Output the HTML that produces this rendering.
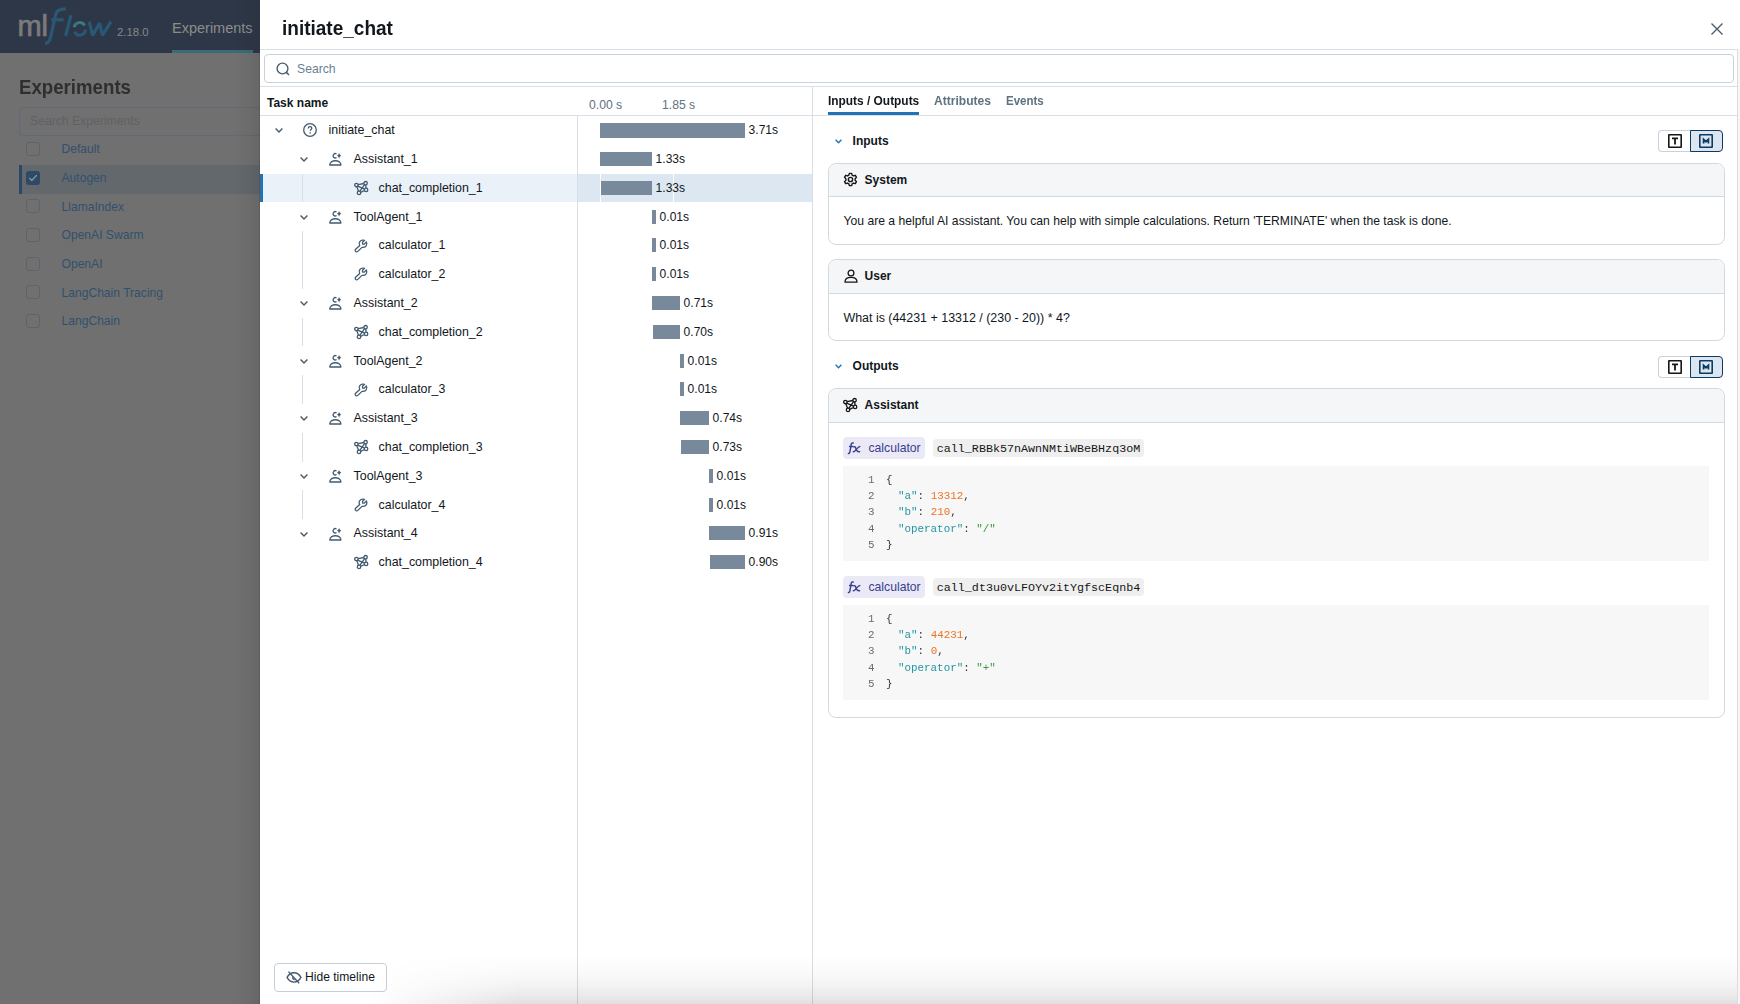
<!DOCTYPE html>
<html><head><meta charset="utf-8">
<style>
html,body{margin:0;padding:0;}
body{width:1740px;height:1004px;overflow:hidden;position:relative;background:#707070;font-family:"Liberation Sans", sans-serif;}
.a{position:absolute;box-sizing:border-box;}
.t{position:absolute;white-space:pre;}
svg{position:absolute;overflow:visible;}
</style></head><body>
<div class="a" style="left:0px;top:0px;width:260px;height:53px;background:#2e3747;"></div>
<div class="t " style="left:17.6px;top:8.00px;font-size:29px;line-height:37.7px;color:#7b7b7b;-webkit-text-stroke:0.7px #7b7b7b;letter-spacing:-0.3px;">ml</div>
<svg style="left:0;top:0" width="120" height="53" viewBox="0 0 120 53"><g fill="none" stroke="#285874" stroke-width="3.2" stroke-linecap="butt"><path d="M45 43.4 C48 43.5 49.6 41.5 50.5 37.5 L55.8 14 C56.8 10.2 59.5 8.8 66 8.8"/><path d="M51.3 19.8 H63.6"/><path d="M71 15.2 L65.6 36"/><path d="M89.2 21.6 L92.6 35.4 L99.6 23.2 L102.4 35.4 L111 21.6" stroke-linejoin="bevel"/></g><path d="M74.2 27.2 A5.6 5.6 0 0 1 84.6 25.4" fill="none" stroke="#3b7780" stroke-width="3"/><path d="M85.4 29.6 A5.6 5.6 0 0 1 74.6 31.6" fill="none" stroke="#285874" stroke-width="3"/></svg>
<div class="t " style="left:117px;top:24.84px;font-size:11.4px;line-height:14.82px;color:#888888;">2.18.0</div>
<div class="t " style="left:172px;top:18.55px;font-size:14.5px;line-height:18.85px;color:#8c8c8c;">Experiments</div>
<div class="a" style="left:172px;top:50px;width:81px;height:3px;background:#3b6a79;"></div>
<div class="t " style="left:19px;top:75.47px;font-size:19.8px;line-height:25.74px;color:#2f2f2f;font-weight:bold;transform:scaleX(0.943);transform-origin:0 0;">Experiments</div>
<div class="a" style="left:19px;top:107px;width:260px;height:29px;border:1px solid #5f6b76;border-radius:4px;border-right:none;"></div>
<div class="t " style="left:30px;top:113.84px;font-size:12.2px;line-height:15.86px;color:#5e6266;">Search Experiments</div>
<div class="a" style="left:26px;top:142.0px;width:14px;height:14px;border:1px solid #5d646b;border-radius:3px;"></div>
<div class="t " style="left:61.5px;top:142.24px;font-size:12.1px;line-height:15.73px;color:#32506d;">Default</div>
<div class="a" style="left:19px;top:164.97000000000003px;width:241px;height:29px;background:#63686d;"></div>
<div class="a" style="left:19px;top:164.97000000000003px;width:3px;height:29px;background:#2d4864;"></div>
<div class="a" style="left:26px;top:170.67000000000002px;width:14px;height:14px;background:#2e4a67;border-radius:3px;"></div>
<svg style="left:26px;top:170.67000000000002px" width="14" height="14" viewBox="0 0 14 14"><path d="M3.4 6.8 L5.8 9.4 L10.8 4.2" fill="none" stroke="#95a3b0" stroke-width="1.1"/></svg>
<div class="t " style="left:61.5px;top:170.91px;font-size:12.1px;line-height:15.73px;color:#32506d;">Autogen</div>
<div class="a" style="left:26px;top:199.34px;width:14px;height:14px;border:1px solid #5d646b;border-radius:3px;"></div>
<div class="t " style="left:61.5px;top:199.58px;font-size:12.1px;line-height:15.73px;color:#32506d;">LlamaIndex</div>
<div class="a" style="left:26px;top:228.01px;width:14px;height:14px;border:1px solid #5d646b;border-radius:3px;"></div>
<div class="t " style="left:61.5px;top:228.25px;font-size:12.1px;line-height:15.73px;color:#32506d;">OpenAI Swarm</div>
<div class="a" style="left:26px;top:256.68px;width:14px;height:14px;border:1px solid #5d646b;border-radius:3px;"></div>
<div class="t " style="left:61.5px;top:256.92px;font-size:12.1px;line-height:15.73px;color:#32506d;">OpenAI</div>
<div class="a" style="left:26px;top:285.35px;width:14px;height:14px;border:1px solid #5d646b;border-radius:3px;"></div>
<div class="t " style="left:61.5px;top:285.59px;font-size:12.1px;line-height:15.73px;color:#32506d;">LangChain Tracing</div>
<div class="a" style="left:26px;top:314.02px;width:14px;height:14px;border:1px solid #5d646b;border-radius:3px;"></div>
<div class="t " style="left:61.5px;top:314.26px;font-size:12.1px;line-height:15.73px;color:#32506d;">LangChain</div>
<div class="a" style="left:232px;top:53px;width:28px;height:951px;background:linear-gradient(to right, rgba(0,0,0,0), rgba(0,0,0,0.03) 50%, rgba(0,0,0,0.085));"></div>
<div class="a" style="left:259px;top:53px;width:1px;height:951px;background:rgba(0,0,0,0.1);"></div>
<div class="a" style="left:232px;top:0px;width:28px;height:53px;background:linear-gradient(to right, rgba(0,0,0,0), rgba(0,0,0,0.03) 50%, rgba(0,0,0,0.06));"></div>
<div class="a" style="left:260px;top:0px;width:1480px;height:1004px;background:#fff;"></div>
<div class="t " style="left:282px;top:13.87px;font-size:21px;line-height:27.3px;color:#11171c;font-weight:bold;transform:scaleX(0.905);transform-origin:0 0;">initiate_chat</div>
<svg style="left:1710.5px;top:23px" width="12" height="12" viewBox="0 0 12 12"><path d="M0.5 0.5 L11.5 11.5 M11.5 0.5 L0.5 11.5" stroke="#4a5d6e" stroke-width="1.4" fill="none"/></svg>
<div class="a" style="left:260px;top:49px;width:1478px;height:1px;background:#d8dfe6;"></div>
<div class="a" style="left:1737px;top:49px;width:1px;height:955px;background:#dcdcdc;"></div>
<div class="a" style="left:1738px;top:49px;width:2px;height:955px;background:#f6f6f6;"></div>
<div class="a" style="left:264px;top:54px;width:1470px;height:29px;border:1px solid #c7d2dc;border-radius:4px;"></div>
<svg style="left:276px;top:62px" width="14" height="14" viewBox="0 0 14 14"><circle cx="6.5" cy="6.5" r="5.4" fill="none" stroke="#4a5e70" stroke-width="1.4"/><path d="M10.4 10.4 L13 13" stroke="#4a5e70" stroke-width="1.5"/></svg>
<div class="t " style="left:297px;top:61.84px;font-size:12.2px;line-height:15.86px;color:#6b7f90;">Search</div>
<div class="a" style="left:260px;top:86px;width:1477px;height:1px;background:#d8dfe6;"></div>
<div class="t " style="left:267px;top:96.04px;font-size:12px;line-height:15.6px;color:#11171c;font-weight:bold;">Task name</div>
<div class="t " style="left:589px;top:97.84px;font-size:12.2px;line-height:15.86px;color:#5f7281;">0.00 s</div>
<div class="t " style="left:662px;top:97.84px;font-size:12.2px;line-height:15.86px;color:#5f7281;">1.85 s</div>
<div class="a" style="left:260px;top:115px;width:552px;height:1px;background:#d8dfe6;"></div>
<div class="a" style="left:577px;top:115px;width:1px;height:889px;background:#d8dfe6;"></div>
<div class="a" style="left:812px;top:86px;width:1px;height:918px;background:#d8dfe6;"></div>
<svg style="left:275px;top:128.4px" width="8" height="5" viewBox="0 0 8 5"><path d="M0.6 0.6 L4 4 L7.4 0.6" fill="none" stroke="#445a6e" stroke-width="1.4"/></svg>
<svg style="left:303px;top:123.4px" width="14" height="14" viewBox="0 0 14 14"><circle cx="7" cy="7" r="6.3" fill="none" stroke="#445a6e" stroke-width="1.3"/><path d="M5.2 5.4 C5.2 4.3 6 3.7 7 3.7 C8 3.7 8.8 4.3 8.8 5.3 C8.8 6.4 7.3 6.5 7.3 7.8" fill="none" stroke="#445a6e" stroke-width="1.3"/><rect x="6.5" y="9.3" width="1.4" height="1.3" fill="#445a6e"/></svg>
<div class="t " style="left:328.6px;top:122.24px;font-size:12.4px;line-height:16.12px;color:#11171c;">initiate_chat</div>
<div class="a" style="left:600px;top:123.2px;width:145px;height:14.5px;background:#77899a;"></div>
<div class="t " style="left:748.6px;top:123.29px;font-size:12.05px;line-height:15.67px;color:#11171c;">3.71s</div>
<svg style="left:300px;top:157.20000000000002px" width="8" height="5" viewBox="0 0 8 5"><path d="M0.6 0.6 L4 4 L7.4 0.6" fill="none" stroke="#445a6e" stroke-width="1.4"/></svg>
<svg style="left:329px;top:152.20000000000002px" width="14" height="14" viewBox="0 0 14 14"><path d="M7.5 2.05 A2.15 2.15 0 1 0 7.5 5.55" fill="none" stroke="#445a6e" stroke-width="1.35"/><path d="M10.1 0.9 L10.95 2.85 L12.3 3.7 L10.95 4.55 L10.1 6.5 L9.25 4.55 L7.9 3.7 L9.25 2.85 Z" fill="#445a6e"/><path d="M0.8 13 C0.8 10.3 3.4 8.7 6.35 8.7 C9.3 8.7 11.9 10.3 11.9 13 Z" fill="none" stroke="#445a6e" stroke-width="1.35" stroke-linejoin="round"/></svg>
<div class="t " style="left:353.6px;top:151.04px;font-size:12.4px;line-height:16.12px;color:#11171c;">Assistant_1</div>
<div class="a" style="left:600px;top:152.00000000000003px;width:52px;height:14px;background:#77899a;"></div>
<div class="t " style="left:655.6px;top:152.09px;font-size:12.05px;line-height:15.67px;color:#11171c;">1.33s</div>
<div class="a" style="left:260px;top:173.6px;width:317px;height:28.8px;background:#ebf1f8;"></div>
<div class="a" style="left:260px;top:173.6px;width:3px;height:28.8px;background:#2272b4;"></div>
<div class="a" style="left:578px;top:173.6px;width:234px;height:28.8px;background:#dce7f1;"></div>
<div class="a" style="left:600px;top:173.6px;width:1px;height:28.8px;background:#fff;"></div>
<div class="a" style="left:673px;top:173.6px;width:1px;height:28.8px;background:#fff;"></div>
<div class="a" style="left:302px;top:173.6px;width:1px;height:28.8px;background:#d8dfe6;"></div>
<svg style="left:353.6px;top:181.0px" width="15" height="14" viewBox="0 0 15 14"><g fill="none" stroke="#445a6e" stroke-width="1.3"><circle cx="2.4" cy="4" r="1.7"/><circle cx="11.6" cy="2.2" r="1.7"/><circle cx="12.1" cy="8.9" r="1.7"/><circle cx="5" cy="11.9" r="1.7"/><path d="M4.1 3.6 L9.9 2.5 M11.8 3.9 L12 7.2 M10.5 9.5 L6.6 11.3 M4.6 10.2 L2.8 5.7 M3.6 5.2 L10.6 8.1 M10.6 3.6 L5.8 10.4"/></g></svg>
<div class="t " style="left:378.6px;top:179.84px;font-size:12.4px;line-height:16.12px;color:#11171c;">chat_completion_1</div>
<div class="a" style="left:601px;top:180.8px;width:51px;height:14px;background:#77899a;"></div>
<div class="t " style="left:655.6px;top:180.89px;font-size:12.05px;line-height:15.67px;color:#11171c;">1.33s</div>
<svg style="left:300px;top:214.8px" width="8" height="5" viewBox="0 0 8 5"><path d="M0.6 0.6 L4 4 L7.4 0.6" fill="none" stroke="#445a6e" stroke-width="1.4"/></svg>
<svg style="left:329px;top:209.8px" width="14" height="14" viewBox="0 0 14 14"><path d="M7.5 2.05 A2.15 2.15 0 1 0 7.5 5.55" fill="none" stroke="#445a6e" stroke-width="1.35"/><path d="M10.1 0.9 L10.95 2.85 L12.3 3.7 L10.95 4.55 L10.1 6.5 L9.25 4.55 L7.9 3.7 L9.25 2.85 Z" fill="#445a6e"/><path d="M0.8 13 C0.8 10.3 3.4 8.7 6.35 8.7 C9.3 8.7 11.9 10.3 11.9 13 Z" fill="none" stroke="#445a6e" stroke-width="1.35" stroke-linejoin="round"/></svg>
<div class="t " style="left:353.6px;top:208.64px;font-size:12.4px;line-height:16.12px;color:#11171c;">ToolAgent_1</div>
<div class="a" style="left:652px;top:209.60000000000002px;width:4px;height:14px;background:#77899a;"></div>
<div class="t " style="left:659.6px;top:209.69px;font-size:12.05px;line-height:15.67px;color:#11171c;">0.01s</div>
<div class="a" style="left:302px;top:231.20000000000002px;width:1px;height:28.8px;background:#d8dfe6;"></div>
<svg style="left:354px;top:237.60000000000002px" width="14" height="14" viewBox="0 0 14 14"><path d="M5.7 7.4 C5 6.3 5 4.8 5.8 3.7 C6.6 2.6 7.8 2.1 9 2.2 L10.6 2.3 L8.5 4.3 L8.6 6 L10.3 6.1 L12.4 4 C13 5.4 12.9 7 12 8.1 C11.1 9.2 9.6 9.6 8 9.4 L3.8 13.4 C3.2 14 2.2 14 1.6 13.4 C1 12.8 1 11.8 1.6 11.2 Z" fill="none" stroke="#445a6e" stroke-width="1.3" stroke-linejoin="round"/></svg>
<div class="t " style="left:378.6px;top:237.44px;font-size:12.4px;line-height:16.12px;color:#11171c;">calculator_1</div>
<div class="a" style="left:652px;top:238.40000000000003px;width:4px;height:14px;background:#77899a;"></div>
<div class="t " style="left:659.6px;top:238.49px;font-size:12.05px;line-height:15.67px;color:#11171c;">0.01s</div>
<div class="a" style="left:302px;top:260.0px;width:1px;height:28.8px;background:#d8dfe6;"></div>
<svg style="left:354px;top:266.4px" width="14" height="14" viewBox="0 0 14 14"><path d="M5.7 7.4 C5 6.3 5 4.8 5.8 3.7 C6.6 2.6 7.8 2.1 9 2.2 L10.6 2.3 L8.5 4.3 L8.6 6 L10.3 6.1 L12.4 4 C13 5.4 12.9 7 12 8.1 C11.1 9.2 9.6 9.6 8 9.4 L3.8 13.4 C3.2 14 2.2 14 1.6 13.4 C1 12.8 1 11.8 1.6 11.2 Z" fill="none" stroke="#445a6e" stroke-width="1.3" stroke-linejoin="round"/></svg>
<div class="t " style="left:378.6px;top:266.24px;font-size:12.4px;line-height:16.12px;color:#11171c;">calculator_2</div>
<div class="a" style="left:652px;top:267.2px;width:4px;height:14px;background:#77899a;"></div>
<div class="t " style="left:659.6px;top:267.29px;font-size:12.05px;line-height:15.67px;color:#11171c;">0.01s</div>
<svg style="left:300px;top:301.20000000000005px" width="8" height="5" viewBox="0 0 8 5"><path d="M0.6 0.6 L4 4 L7.4 0.6" fill="none" stroke="#445a6e" stroke-width="1.4"/></svg>
<svg style="left:329px;top:296.20000000000005px" width="14" height="14" viewBox="0 0 14 14"><path d="M7.5 2.05 A2.15 2.15 0 1 0 7.5 5.55" fill="none" stroke="#445a6e" stroke-width="1.35"/><path d="M10.1 0.9 L10.95 2.85 L12.3 3.7 L10.95 4.55 L10.1 6.5 L9.25 4.55 L7.9 3.7 L9.25 2.85 Z" fill="#445a6e"/><path d="M0.8 13 C0.8 10.3 3.4 8.7 6.35 8.7 C9.3 8.7 11.9 10.3 11.9 13 Z" fill="none" stroke="#445a6e" stroke-width="1.35" stroke-linejoin="round"/></svg>
<div class="t " style="left:353.6px;top:295.04px;font-size:12.4px;line-height:16.12px;color:#11171c;">Assistant_2</div>
<div class="a" style="left:652px;top:296.00000000000006px;width:28px;height:14px;background:#77899a;"></div>
<div class="t " style="left:683.6px;top:296.09px;font-size:12.05px;line-height:15.67px;color:#11171c;">0.71s</div>
<div class="a" style="left:302px;top:317.6px;width:1px;height:28.8px;background:#d8dfe6;"></div>
<svg style="left:353.6px;top:325.0px" width="15" height="14" viewBox="0 0 15 14"><g fill="none" stroke="#445a6e" stroke-width="1.3"><circle cx="2.4" cy="4" r="1.7"/><circle cx="11.6" cy="2.2" r="1.7"/><circle cx="12.1" cy="8.9" r="1.7"/><circle cx="5" cy="11.9" r="1.7"/><path d="M4.1 3.6 L9.9 2.5 M11.8 3.9 L12 7.2 M10.5 9.5 L6.6 11.3 M4.6 10.2 L2.8 5.7 M3.6 5.2 L10.6 8.1 M10.6 3.6 L5.8 10.4"/></g></svg>
<div class="t " style="left:378.6px;top:323.84px;font-size:12.4px;line-height:16.12px;color:#11171c;">chat_completion_2</div>
<div class="a" style="left:653px;top:324.8px;width:27px;height:14px;background:#77899a;"></div>
<div class="t " style="left:683.6px;top:324.89px;font-size:12.05px;line-height:15.67px;color:#11171c;">0.70s</div>
<svg style="left:300px;top:358.8px" width="8" height="5" viewBox="0 0 8 5"><path d="M0.6 0.6 L4 4 L7.4 0.6" fill="none" stroke="#445a6e" stroke-width="1.4"/></svg>
<svg style="left:329px;top:353.8px" width="14" height="14" viewBox="0 0 14 14"><path d="M7.5 2.05 A2.15 2.15 0 1 0 7.5 5.55" fill="none" stroke="#445a6e" stroke-width="1.35"/><path d="M10.1 0.9 L10.95 2.85 L12.3 3.7 L10.95 4.55 L10.1 6.5 L9.25 4.55 L7.9 3.7 L9.25 2.85 Z" fill="#445a6e"/><path d="M0.8 13 C0.8 10.3 3.4 8.7 6.35 8.7 C9.3 8.7 11.9 10.3 11.9 13 Z" fill="none" stroke="#445a6e" stroke-width="1.35" stroke-linejoin="round"/></svg>
<div class="t " style="left:353.6px;top:352.64px;font-size:12.4px;line-height:16.12px;color:#11171c;">ToolAgent_2</div>
<div class="a" style="left:680px;top:353.6px;width:4px;height:14px;background:#77899a;"></div>
<div class="t " style="left:687.6px;top:353.69px;font-size:12.05px;line-height:15.67px;color:#11171c;">0.01s</div>
<div class="a" style="left:302px;top:375.20000000000005px;width:1px;height:28.8px;background:#d8dfe6;"></div>
<svg style="left:354px;top:381.6px" width="14" height="14" viewBox="0 0 14 14"><path d="M5.7 7.4 C5 6.3 5 4.8 5.8 3.7 C6.6 2.6 7.8 2.1 9 2.2 L10.6 2.3 L8.5 4.3 L8.6 6 L10.3 6.1 L12.4 4 C13 5.4 12.9 7 12 8.1 C11.1 9.2 9.6 9.6 8 9.4 L3.8 13.4 C3.2 14 2.2 14 1.6 13.4 C1 12.8 1 11.8 1.6 11.2 Z" fill="none" stroke="#445a6e" stroke-width="1.3" stroke-linejoin="round"/></svg>
<div class="t " style="left:378.6px;top:381.44px;font-size:12.4px;line-height:16.12px;color:#11171c;">calculator_3</div>
<div class="a" style="left:680px;top:382.40000000000003px;width:4px;height:14px;background:#77899a;"></div>
<div class="t " style="left:687.6px;top:382.49px;font-size:12.05px;line-height:15.67px;color:#11171c;">0.01s</div>
<svg style="left:300px;top:416.4px" width="8" height="5" viewBox="0 0 8 5"><path d="M0.6 0.6 L4 4 L7.4 0.6" fill="none" stroke="#445a6e" stroke-width="1.4"/></svg>
<svg style="left:329px;top:411.4px" width="14" height="14" viewBox="0 0 14 14"><path d="M7.5 2.05 A2.15 2.15 0 1 0 7.5 5.55" fill="none" stroke="#445a6e" stroke-width="1.35"/><path d="M10.1 0.9 L10.95 2.85 L12.3 3.7 L10.95 4.55 L10.1 6.5 L9.25 4.55 L7.9 3.7 L9.25 2.85 Z" fill="#445a6e"/><path d="M0.8 13 C0.8 10.3 3.4 8.7 6.35 8.7 C9.3 8.7 11.9 10.3 11.9 13 Z" fill="none" stroke="#445a6e" stroke-width="1.35" stroke-linejoin="round"/></svg>
<div class="t " style="left:353.6px;top:410.24px;font-size:12.4px;line-height:16.12px;color:#11171c;">Assistant_3</div>
<div class="a" style="left:680px;top:411.2px;width:29px;height:14px;background:#77899a;"></div>
<div class="t " style="left:712.6px;top:411.29px;font-size:12.05px;line-height:15.67px;color:#11171c;">0.74s</div>
<div class="a" style="left:302px;top:432.80000000000007px;width:1px;height:28.8px;background:#d8dfe6;"></div>
<svg style="left:353.6px;top:440.20000000000005px" width="15" height="14" viewBox="0 0 15 14"><g fill="none" stroke="#445a6e" stroke-width="1.3"><circle cx="2.4" cy="4" r="1.7"/><circle cx="11.6" cy="2.2" r="1.7"/><circle cx="12.1" cy="8.9" r="1.7"/><circle cx="5" cy="11.9" r="1.7"/><path d="M4.1 3.6 L9.9 2.5 M11.8 3.9 L12 7.2 M10.5 9.5 L6.6 11.3 M4.6 10.2 L2.8 5.7 M3.6 5.2 L10.6 8.1 M10.6 3.6 L5.8 10.4"/></g></svg>
<div class="t " style="left:378.6px;top:439.04px;font-size:12.4px;line-height:16.12px;color:#11171c;">chat_completion_3</div>
<div class="a" style="left:681px;top:440.00000000000006px;width:28px;height:14px;background:#77899a;"></div>
<div class="t " style="left:712.6px;top:440.09px;font-size:12.05px;line-height:15.67px;color:#11171c;">0.73s</div>
<svg style="left:300px;top:474.0px" width="8" height="5" viewBox="0 0 8 5"><path d="M0.6 0.6 L4 4 L7.4 0.6" fill="none" stroke="#445a6e" stroke-width="1.4"/></svg>
<svg style="left:329px;top:469.0px" width="14" height="14" viewBox="0 0 14 14"><path d="M7.5 2.05 A2.15 2.15 0 1 0 7.5 5.55" fill="none" stroke="#445a6e" stroke-width="1.35"/><path d="M10.1 0.9 L10.95 2.85 L12.3 3.7 L10.95 4.55 L10.1 6.5 L9.25 4.55 L7.9 3.7 L9.25 2.85 Z" fill="#445a6e"/><path d="M0.8 13 C0.8 10.3 3.4 8.7 6.35 8.7 C9.3 8.7 11.9 10.3 11.9 13 Z" fill="none" stroke="#445a6e" stroke-width="1.35" stroke-linejoin="round"/></svg>
<div class="t " style="left:353.6px;top:467.84px;font-size:12.4px;line-height:16.12px;color:#11171c;">ToolAgent_3</div>
<div class="a" style="left:709px;top:468.8px;width:4px;height:14px;background:#77899a;"></div>
<div class="t " style="left:716.6px;top:468.89px;font-size:12.05px;line-height:15.67px;color:#11171c;">0.01s</div>
<div class="a" style="left:302px;top:490.4000000000001px;width:1px;height:28.8px;background:#d8dfe6;"></div>
<svg style="left:354px;top:496.80000000000007px" width="14" height="14" viewBox="0 0 14 14"><path d="M5.7 7.4 C5 6.3 5 4.8 5.8 3.7 C6.6 2.6 7.8 2.1 9 2.2 L10.6 2.3 L8.5 4.3 L8.6 6 L10.3 6.1 L12.4 4 C13 5.4 12.9 7 12 8.1 C11.1 9.2 9.6 9.6 8 9.4 L3.8 13.4 C3.2 14 2.2 14 1.6 13.4 C1 12.8 1 11.8 1.6 11.2 Z" fill="none" stroke="#445a6e" stroke-width="1.3" stroke-linejoin="round"/></svg>
<div class="t " style="left:378.6px;top:496.64px;font-size:12.4px;line-height:16.12px;color:#11171c;">calculator_4</div>
<div class="a" style="left:709px;top:497.6000000000001px;width:4px;height:14px;background:#77899a;"></div>
<div class="t " style="left:716.6px;top:497.69px;font-size:12.05px;line-height:15.67px;color:#11171c;">0.01s</div>
<svg style="left:300px;top:531.6px" width="8" height="5" viewBox="0 0 8 5"><path d="M0.6 0.6 L4 4 L7.4 0.6" fill="none" stroke="#445a6e" stroke-width="1.4"/></svg>
<svg style="left:329px;top:526.6px" width="14" height="14" viewBox="0 0 14 14"><path d="M7.5 2.05 A2.15 2.15 0 1 0 7.5 5.55" fill="none" stroke="#445a6e" stroke-width="1.35"/><path d="M10.1 0.9 L10.95 2.85 L12.3 3.7 L10.95 4.55 L10.1 6.5 L9.25 4.55 L7.9 3.7 L9.25 2.85 Z" fill="#445a6e"/><path d="M0.8 13 C0.8 10.3 3.4 8.7 6.35 8.7 C9.3 8.7 11.9 10.3 11.9 13 Z" fill="none" stroke="#445a6e" stroke-width="1.35" stroke-linejoin="round"/></svg>
<div class="t " style="left:353.6px;top:525.44px;font-size:12.4px;line-height:16.12px;color:#11171c;">Assistant_4</div>
<div class="a" style="left:709px;top:526.4px;width:36px;height:14px;background:#77899a;"></div>
<div class="t " style="left:748.6px;top:526.49px;font-size:12.05px;line-height:15.67px;color:#11171c;">0.91s</div>
<svg style="left:353.6px;top:555.4px" width="15" height="14" viewBox="0 0 15 14"><g fill="none" stroke="#445a6e" stroke-width="1.3"><circle cx="2.4" cy="4" r="1.7"/><circle cx="11.6" cy="2.2" r="1.7"/><circle cx="12.1" cy="8.9" r="1.7"/><circle cx="5" cy="11.9" r="1.7"/><path d="M4.1 3.6 L9.9 2.5 M11.8 3.9 L12 7.2 M10.5 9.5 L6.6 11.3 M4.6 10.2 L2.8 5.7 M3.6 5.2 L10.6 8.1 M10.6 3.6 L5.8 10.4"/></g></svg>
<div class="t " style="left:378.6px;top:554.24px;font-size:12.4px;line-height:16.12px;color:#11171c;">chat_completion_4</div>
<div class="a" style="left:710px;top:555.1999999999999px;width:35px;height:14px;background:#77899a;"></div>
<div class="t " style="left:748.6px;top:555.29px;font-size:12.05px;line-height:15.67px;color:#11171c;">0.90s</div>
<div class="a" style="left:274px;top:963px;width:113px;height:29px;border:1px solid #c4cfd9;border-radius:4px;background:#fff;"></div>
<svg style="left:285.5px;top:970.8px" width="16" height="12.8" viewBox="0 0 15 12"><g fill="none" stroke="#445a6e" stroke-width="1.3"><path d="M1 6 C2.6 3 4.8 1.6 7.5 1.6 C10.2 1.6 12.4 3 14 6 C12.4 9 10.2 10.4 7.5 10.4 C4.8 10.4 2.6 9 1 6 Z"/><path d="M2.3 0.6 L12.4 11.4"/></g><path d="M5.6 5.2 L8.6 8.4 C7.2 9 5.2 8 5.6 5.2 Z" fill="#445a6e"/></svg>
<div class="t " style="left:305px;top:969.64px;font-size:12.1px;line-height:15.73px;color:#11171c;">Hide timeline</div>
<div class="t " style="left:828px;top:92.54px;font-size:12.5px;line-height:16.25px;color:#11171c;font-weight:bold;transform:scaleX(0.952);transform-origin:0 0;">Inputs / Outputs</div>
<div class="t " style="left:934px;top:92.54px;font-size:12.5px;line-height:16.25px;color:#5f7281;font-weight:bold;transform:scaleX(0.965);transform-origin:0 0;">Attributes</div>
<div class="t " style="left:1005.7px;top:92.54px;font-size:12.5px;line-height:16.25px;color:#5f7281;font-weight:bold;transform:scaleX(0.92);transform-origin:0 0;">Events</div>
<div class="a" style="left:813px;top:115px;width:924px;height:1px;background:#d8dfe6;"></div>
<div class="a" style="left:828px;top:112px;width:91px;height:3px;background:#2272b4;"></div>
<svg style="left:835px;top:138.5px" width="7" height="5" viewBox="0 0 7 5"><path d="M0.6 0.8 L3.5 3.7 L6.4 0.8" fill="none" stroke="#2272b4" stroke-width="1.4"/></svg>
<div class="t " style="left:852.6px;top:134.04px;font-size:12px;line-height:15.6px;color:#11171c;font-weight:bold;">Inputs</div>
<div class="a" style="left:1658px;top:130px;width:33px;height:22px;border:1px solid #c7d2dc;border-right:none;border-radius:4px 0 0 4px;background:#fff;"></div>
<div class="a" style="left:1690px;top:130px;width:33px;height:22px;border:1.5px solid #0e3a62;border-radius:0 4px 4px 0;background:#dbe6f0;"></div>
<svg style="left:1668px;top:134px" width="14" height="14" viewBox="0 0 14 14"><rect x="0.8" y="0.8" width="12.4" height="12.4" rx="0.3" fill="none" stroke="#161616" stroke-width="1.6"/><path d="M4 4.3 H10 M7 4.3 V10.4" stroke="#161616" stroke-width="1.8" fill="none"/></svg>
<svg style="left:1699px;top:134px" width="14" height="14" viewBox="0 0 14 14"><rect x="0.8" y="0.8" width="12.4" height="12.4" rx="0.3" fill="none" stroke="#0e3a62" stroke-width="1.6"/><path d="M4.6 9.5 V5.4 L7 7.7 L9.4 5.4 V9.5" stroke="#0e3a62" stroke-width="1.8" fill="none" stroke-linejoin="miter"/></svg>
<div class="a" style="left:828px;top:163px;width:897px;height:82px;border:1px solid #d1d9e1;border-radius:8px;background:#fff;overflow:hidden;"></div>
<div class="a" style="left:829px;top:164px;width:895px;height:32px;background:#f5f6f8;border-radius:7px 7px 0 0;"></div>
<div class="a" style="left:829px;top:196px;width:895px;height:1px;background:#d1d9e1;"></div>
<svg style="left:842.6px;top:172.4px" width="15" height="15" viewBox="0 0 14 14"><g fill="none" stroke="#161616" stroke-width="1.3" stroke-linejoin="round"><path d="M5.9 0.8 H8.1 L8.5 2.5 L9.8 3.2 L11.5 2.6 L12.6 4.5 L11.3 5.7 V7.3 L12.6 8.5 L11.5 10.4 L9.8 9.8 L8.5 10.5 L8.1 12.2 H5.9 L5.5 10.5 L4.2 9.8 L2.5 10.4 L1.4 8.5 L2.7 7.3 V5.7 L1.4 4.5 L2.5 2.6 L4.2 3.2 L5.5 2.5 Z" transform="translate(0 0.5)"/><circle cx="7" cy="7" r="2"/></g></svg>
<div class="t " style="left:864.6px;top:173.04px;font-size:12px;line-height:15.6px;color:#11171c;font-weight:bold;">System</div>
<div class="t " style="left:843.5px;top:213.88px;font-size:12.16px;line-height:15.81px;color:#11171c;">You are a helpful AI assistant. You can help with simple calculations. Return 'TERMINATE' when the task is done.</div>
<div class="a" style="left:828px;top:259px;width:897px;height:82px;border:1px solid #d1d9e1;border-radius:8px;background:#fff;overflow:hidden;"></div>
<div class="a" style="left:829px;top:260px;width:895px;height:33px;background:#f5f6f8;border-radius:7px 7px 0 0;"></div>
<div class="a" style="left:829px;top:293px;width:895px;height:1px;background:#d1d9e1;"></div>
<svg style="left:843.5px;top:269px" width="14" height="14" viewBox="0 0 14 14"><g fill="none" stroke="#161616" stroke-width="1.3"><circle cx="7" cy="4" r="2.9"/><path d="M1 13.2 C1 10 3.6 8.4 7 8.4 C10.4 8.4 13 10 13 13.2 Z" stroke-linejoin="round"/></g></svg>
<div class="t " style="left:864.6px;top:269.04px;font-size:12px;line-height:15.6px;color:#11171c;font-weight:bold;">User</div>
<div class="t " style="left:843.4px;top:309.90px;font-size:12.45px;line-height:16.18px;color:#11171c;">What is (44231 + 13312 / (230 - 20)) * 4?</div>
<svg style="left:835px;top:363.5px" width="7" height="5" viewBox="0 0 7 5"><path d="M0.6 0.8 L3.5 3.7 L6.4 0.8" fill="none" stroke="#2272b4" stroke-width="1.4"/></svg>
<div class="t " style="left:852.6px;top:359.04px;font-size:12px;line-height:15.6px;color:#11171c;font-weight:bold;">Outputs</div>
<div class="a" style="left:1658px;top:356px;width:33px;height:22px;border:1px solid #c7d2dc;border-right:none;border-radius:4px 0 0 4px;background:#fff;"></div>
<div class="a" style="left:1690px;top:356px;width:33px;height:22px;border:1.5px solid #0e3a62;border-radius:0 4px 4px 0;background:#dbe6f0;"></div>
<svg style="left:1668px;top:360px" width="14" height="14" viewBox="0 0 14 14"><rect x="0.8" y="0.8" width="12.4" height="12.4" rx="0.3" fill="none" stroke="#161616" stroke-width="1.6"/><path d="M4 4.3 H10 M7 4.3 V10.4" stroke="#161616" stroke-width="1.8" fill="none"/></svg>
<svg style="left:1699px;top:360px" width="14" height="14" viewBox="0 0 14 14"><rect x="0.8" y="0.8" width="12.4" height="12.4" rx="0.3" fill="none" stroke="#0e3a62" stroke-width="1.6"/><path d="M4.6 9.5 V5.4 L7 7.7 L9.4 5.4 V9.5" stroke="#0e3a62" stroke-width="1.8" fill="none" stroke-linejoin="miter"/></svg>
<div class="a" style="left:828px;top:388px;width:897px;height:330px;border:1px solid #d1d9e1;border-radius:8px;background:#fff;overflow:hidden;"></div>
<div class="a" style="left:829px;top:389px;width:895px;height:33px;background:#f5f6f8;border-radius:7px 7px 0 0;"></div>
<div class="a" style="left:829px;top:422px;width:895px;height:1px;background:#d1d9e1;"></div>
<svg style="left:843px;top:398px" width="15" height="14" viewBox="0 0 15 14"><g fill="none" stroke="#161616" stroke-width="1.3"><circle cx="2.4" cy="4" r="1.7"/><circle cx="11.6" cy="2.2" r="1.7"/><circle cx="12.1" cy="8.9" r="1.7"/><circle cx="5" cy="11.9" r="1.7"/><path d="M4.1 3.6 L9.9 2.5 M11.8 3.9 L12 7.2 M10.5 9.5 L6.6 11.3 M4.6 10.2 L2.8 5.7 M3.6 5.2 L10.6 8.1 M10.6 3.6 L5.8 10.4"/></g></svg>
<div class="t " style="left:864.6px;top:398.04px;font-size:12px;line-height:15.6px;color:#11171c;font-weight:bold;">Assistant</div>
<div class="a" style="left:843px;top:437px;width:82px;height:22px;background:#ece9f6;border-radius:4px;"></div>
<svg style="left:847.5px;top:442px" width="13" height="13" viewBox="0 0 13 13"><g fill="none" stroke="#36408e" stroke-width="1.45" stroke-linecap="round"><path d="M5.2 1 C4.1 0.7 3.4 1.3 3.2 2.4 L1.9 9.8 C1.7 10.9 1.2 11.6 0.4 11.5"/><path d="M1.6 4.4 H4.8"/><path d="M5.8 4.8 C7 4.4 7.6 5.3 8 6.9 C8.4 8.7 9.2 10 11.6 9.8"/><path d="M11.8 4.6 C10.4 4.8 8.8 6.7 7.5 8.4 C6.9 9.2 6.2 9.9 5.3 9.8"/></g></svg>
<div class="t " style="left:868.5px;top:441.04px;font-size:12.2px;line-height:15.86px;color:#36408e;">calculator</div>
<div class="a" style="left:933px;top:439px;width:211px;height:17.5px;background:#efefef;border-radius:4px;"></div>
<div class="t " style="left:936.8px;top:441.54px;font-size:11.7px;line-height:15.21px;color:#161616;font-family:'Liberation Mono', monospace;">call_RBBk57nAwnNMtiWBeBHzq3oM</div>
<div class="a" style="left:843px;top:466px;width:866px;height:95px;background:#f7f7f7;"></div>
<div class="t " style="left:868px;top:472.84px;font-size:11.8px;line-height:15.34px;color:#6b6b6b;font-family:'Liberation Mono', monospace;transform:scaleX(0.92);transform-origin:0 0;">1</div>
<div class="t " style="left:886px;top:472.84px;font-size:11.8px;line-height:15.34px;color:#333333;font-family:'Liberation Mono', monospace;transform:scaleX(0.92);transform-origin:0 0;"><span style="color:#333333">{</span></div>
<div class="t " style="left:868px;top:489.09px;font-size:11.8px;line-height:15.34px;color:#6b6b6b;font-family:'Liberation Mono', monospace;transform:scaleX(0.92);transform-origin:0 0;">2</div>
<div class="t " style="left:885px;top:489.09px;font-size:11.8px;line-height:15.34px;color:#333333;font-family:'Liberation Mono', monospace;transform:scaleX(0.92);transform-origin:0 0;"><span style="color:#333333">  </span><span style="color:#2195a0">"a"</span><span style="color:#333333">: </span><span style="color:#ec7420">13312</span><span style="color:#333333">,</span></div>
<div class="t " style="left:868px;top:505.34px;font-size:11.8px;line-height:15.34px;color:#6b6b6b;font-family:'Liberation Mono', monospace;transform:scaleX(0.92);transform-origin:0 0;">3</div>
<div class="t " style="left:885px;top:505.34px;font-size:11.8px;line-height:15.34px;color:#333333;font-family:'Liberation Mono', monospace;transform:scaleX(0.92);transform-origin:0 0;"><span style="color:#333333">  </span><span style="color:#2195a0">"b"</span><span style="color:#333333">: </span><span style="color:#ec7420">210</span><span style="color:#333333">,</span></div>
<div class="t " style="left:868px;top:521.59px;font-size:11.8px;line-height:15.34px;color:#6b6b6b;font-family:'Liberation Mono', monospace;transform:scaleX(0.92);transform-origin:0 0;">4</div>
<div class="t " style="left:885px;top:521.59px;font-size:11.8px;line-height:15.34px;color:#333333;font-family:'Liberation Mono', monospace;transform:scaleX(0.92);transform-origin:0 0;"><span style="color:#333333">  </span><span style="color:#2195a0">"operator"</span><span style="color:#333333">: </span><span style="color:#3a9a3c">"/"</span></div>
<div class="t " style="left:868px;top:537.84px;font-size:11.8px;line-height:15.34px;color:#6b6b6b;font-family:'Liberation Mono', monospace;transform:scaleX(0.92);transform-origin:0 0;">5</div>
<div class="t " style="left:886px;top:537.84px;font-size:11.8px;line-height:15.34px;color:#333333;font-family:'Liberation Mono', monospace;transform:scaleX(0.92);transform-origin:0 0;"><span style="color:#333333">}</span></div>
<div class="a" style="left:843px;top:576px;width:82px;height:22px;background:#ece9f6;border-radius:4px;"></div>
<svg style="left:847.5px;top:581px" width="13" height="13" viewBox="0 0 13 13"><g fill="none" stroke="#36408e" stroke-width="1.45" stroke-linecap="round"><path d="M5.2 1 C4.1 0.7 3.4 1.3 3.2 2.4 L1.9 9.8 C1.7 10.9 1.2 11.6 0.4 11.5"/><path d="M1.6 4.4 H4.8"/><path d="M5.8 4.8 C7 4.4 7.6 5.3 8 6.9 C8.4 8.7 9.2 10 11.6 9.8"/><path d="M11.8 4.6 C10.4 4.8 8.8 6.7 7.5 8.4 C6.9 9.2 6.2 9.9 5.3 9.8"/></g></svg>
<div class="t " style="left:868.5px;top:580.04px;font-size:12.2px;line-height:15.86px;color:#36408e;">calculator</div>
<div class="a" style="left:933px;top:578px;width:211px;height:17.5px;background:#efefef;border-radius:4px;"></div>
<div class="t " style="left:936.8px;top:580.54px;font-size:11.7px;line-height:15.21px;color:#161616;font-family:'Liberation Mono', monospace;">call_dt3u0vLFOYv2itYgfscEqnb4</div>
<div class="a" style="left:843px;top:605px;width:866px;height:95px;background:#f7f7f7;"></div>
<div class="t " style="left:868px;top:611.84px;font-size:11.8px;line-height:15.34px;color:#6b6b6b;font-family:'Liberation Mono', monospace;transform:scaleX(0.92);transform-origin:0 0;">1</div>
<div class="t " style="left:886px;top:611.84px;font-size:11.8px;line-height:15.34px;color:#333333;font-family:'Liberation Mono', monospace;transform:scaleX(0.92);transform-origin:0 0;"><span style="color:#333333">{</span></div>
<div class="t " style="left:868px;top:628.09px;font-size:11.8px;line-height:15.34px;color:#6b6b6b;font-family:'Liberation Mono', monospace;transform:scaleX(0.92);transform-origin:0 0;">2</div>
<div class="t " style="left:885px;top:628.09px;font-size:11.8px;line-height:15.34px;color:#333333;font-family:'Liberation Mono', monospace;transform:scaleX(0.92);transform-origin:0 0;"><span style="color:#333333">  </span><span style="color:#2195a0">"a"</span><span style="color:#333333">: </span><span style="color:#ec7420">44231</span><span style="color:#333333">,</span></div>
<div class="t " style="left:868px;top:644.34px;font-size:11.8px;line-height:15.34px;color:#6b6b6b;font-family:'Liberation Mono', monospace;transform:scaleX(0.92);transform-origin:0 0;">3</div>
<div class="t " style="left:885px;top:644.34px;font-size:11.8px;line-height:15.34px;color:#333333;font-family:'Liberation Mono', monospace;transform:scaleX(0.92);transform-origin:0 0;"><span style="color:#333333">  </span><span style="color:#2195a0">"b"</span><span style="color:#333333">: </span><span style="color:#ec7420">0</span><span style="color:#333333">,</span></div>
<div class="t " style="left:868px;top:660.59px;font-size:11.8px;line-height:15.34px;color:#6b6b6b;font-family:'Liberation Mono', monospace;transform:scaleX(0.92);transform-origin:0 0;">4</div>
<div class="t " style="left:885px;top:660.59px;font-size:11.8px;line-height:15.34px;color:#333333;font-family:'Liberation Mono', monospace;transform:scaleX(0.92);transform-origin:0 0;"><span style="color:#333333">  </span><span style="color:#2195a0">"operator"</span><span style="color:#333333">: </span><span style="color:#3a9a3c">"+"</span></div>
<div class="t " style="left:868px;top:676.84px;font-size:11.8px;line-height:15.34px;color:#6b6b6b;font-family:'Liberation Mono', monospace;transform:scaleX(0.92);transform-origin:0 0;">5</div>
<div class="t " style="left:886px;top:676.84px;font-size:11.8px;line-height:15.34px;color:#333333;font-family:'Liberation Mono', monospace;transform:scaleX(0.92);transform-origin:0 0;"><span style="color:#333333">}</span></div>
<div class="a" style="left:260px;top:955px;width:1477px;height:49px;background:linear-gradient(to bottom, rgba(0,0,0,0) 0%, rgba(0,0,0,0.015) 30%, rgba(0,0,0,0.045) 60%, rgba(0,0,0,0.085) 85%, rgba(0,0,0,0.12) 100%);-webkit-mask-image:linear-gradient(to right, transparent 0px, transparent 110px, black 260px);pointer-events:none;"></div>
</body></html>
